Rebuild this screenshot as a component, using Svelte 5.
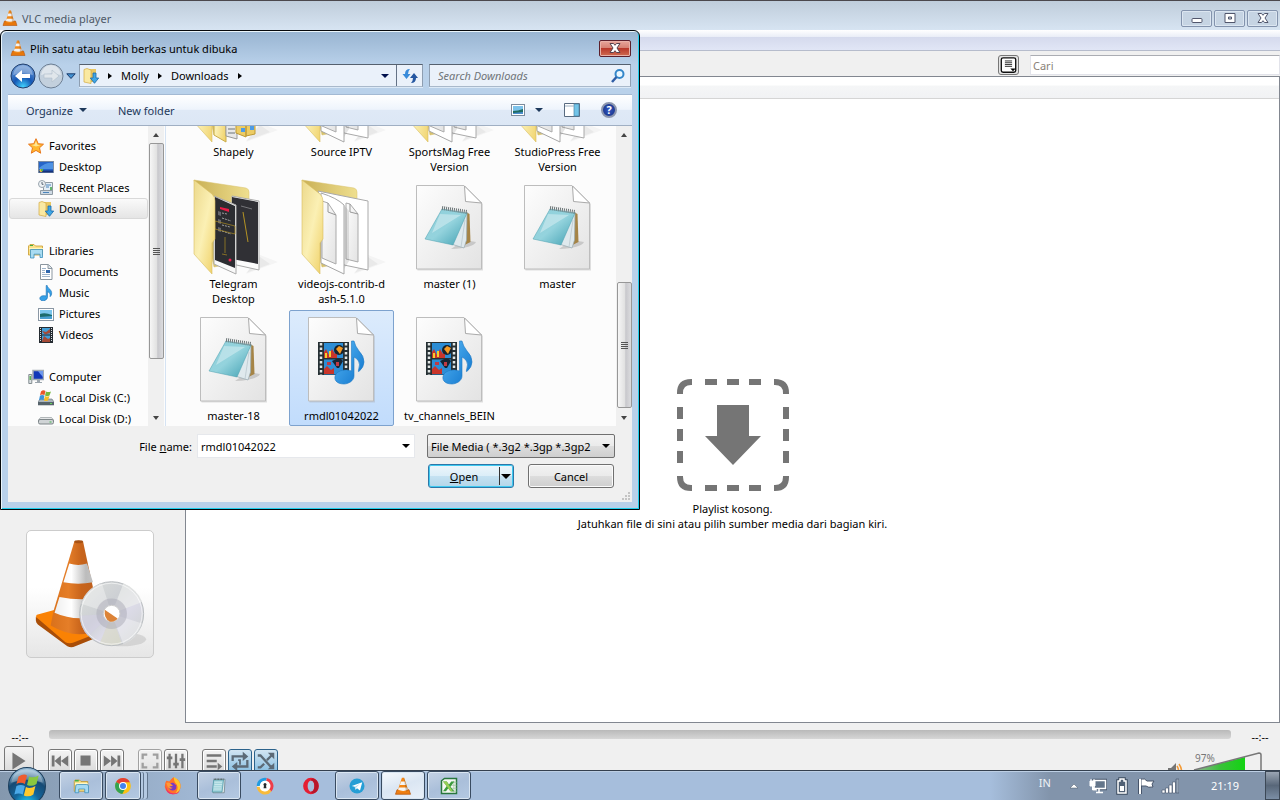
<script>
  const tree = [
    { name: 'Favorites', icon: 'star', items: [['Desktop', 'desktop'], ['Recent Places', 'recent'], ['Downloads', 'downloads']] },
    { name: 'Libraries', icon: 'library', items: [['Documents', 'document'], ['Music', 'music'], ['Pictures', 'picture'], ['Videos', 'video']] },
    { name: 'Computer', icon: 'computer', items: [['Local Disk (C:)', 'diskc'], ['Local Disk (D:)', 'diskd']] }
  ];
  const files = [
    ['Shapely', 'folder-mixed'], ['Source IPTV', 'folder-pages'], ['SportsMag Free\nVersion', 'folder-pages'], ['StudioPress Free\nVersion', 'folder-pages'],
    ['Telegram\nDesktop', 'folder-dark'], ['videojs-contrib-d\nash-5.1.0', 'folder-pages'], ['master (1)', 'notepad'], ['master', 'notepad'],
    ['master-18', 'notepad'], ['rmdl01042022', 'media'], ['tv_channels_BEIN', 'media']
  ];
  const tasks = [
    ['Explorer', 'open'], ['Chrome', 'open stack'], ['Firefox', ''], ['Notepad', 'open'], ['Browser', ''],
    ['Opera', ''], ['Telegram', 'open'], ['VLC', 'open active'], ['Excel', 'open']
  ];
  let selected = $state('rmdl01042022');
  let fileName = $state('rmdl01042022');
  function pick(name) {
    selected = name;
    fileName = name.replace('\n', ' ');
  }
</script>

{#snippet cone()}
  <svg class="i16" viewBox="0 0 16 16">
    <path d="M2.5 11h11l1.500 4.500H1z" fill="#e8780c" stroke="#b9560a" stroke-width=".6" />
    <path d="M7 .5h2L12.300 12q-4.300 2-8.600 0z" fill="#f08a1c" />
    <path d="M6.200 3.500h3.600l.9 2.700H5.300zM4.600 8.700h6.800l.7 2.300q-4 1.500-8.200 0z" fill="#f2f2f2" />
    <path d="M9 .5L12.300 12l-2 .8L8.300.5z" fill="#8b4a18" opacity=".3" />
  </svg>
{/snippet}

{#snippet small(kind)}
  <svg class="i16" viewBox="0 0 16 16">
    {#if kind === 'star'}
      <path d="M8 .7l2.200 5 5.300.5-4 3.600 1.200 5.400L8 12.400l-4.700 2.800 1.200-5.400-4-3.600 5.300-.5z" fill="#ffb82e" stroke="#e8771b" />
      <path d="M8 3l1.400 3.700 3 .5L8 8.500 3.500 7l3-.4z" fill="#ffe694" />
    {:else if kind === 'desktop'}
      <rect x=".5" y="2.500" width="15" height="11" fill="#2665c8" stroke="#7b8da5" />
      <path d="M1 9Q8 3 15 4v6H1z" fill="#5fa5ee" opacity=".7" />
      <path d="M1 11.500h14v2H1z" fill="#16337c" /><circle cx="3" cy="11.500" r="1.500" fill="#f2bd30" /><path d="M3 10h2v2H3z" fill="#56b84c" />
    {:else if kind === 'recent'}
      <path d="M5.500 2.500h9v9h-9z" fill="#e4eef6" stroke="#8f9aa3" /><path d="M2.500 10.500h12v4h-12z" fill="#cfdae4" stroke="#8f9aa3" />
      <path d="M8 5h5M8 7h3M5 12.500h6" stroke="#4b84ba" /><path d="M12 7h2v3h-2z" fill="#62b46c" />
      <circle cx="4" cy="4" r="3.500" fill="#eef2f5" stroke="#98a3ad" /><path d="M4 2v2.300h1.500" stroke="#596775" fill="none" />
    {:else if kind === 'downloads'}
      <path d="M4 1h9v13H4z" fill="#e9c763" /><path d="M1 1.500L4 .5l4 1.500v13.500L1 14z" fill="#fae9a2" stroke="#d2aa43" stroke-width=".7" />
      <path d="M10 5h3v5h2.700l-4.200 5.300L7.300 10H10z" fill="#3fa6e5" stroke="#1969aa" stroke-width=".8" />
    {:else if kind === 'library'}
      <path d="M.5 3L2 1.500h4L7.500 3h7v9H.5z" fill="#fae28a" stroke="#c99a2f" stroke-width=".8" /><path d="M2 2.500h3" stroke="#45ac42" />
      <path d="M2.500 6.500h12v8h-2.500v-3.300h-6v3.800H2.500z" fill="#a9dcf2" stroke="#3c91be" stroke-width=".8" /><path d="M1 5.500h14" stroke="#fff5bd" />
    {:else if kind === 'document'}
      <path d="M2.500.5h8l3.500 3.500v11.500H2.500z" fill="#fff" stroke="#8b969f" /><path d="M10 .5V4.500h4" fill="#dce5eb" stroke="#8b969f" />
      <path d="M4 4.500h4M4 6.500h3M4 8.500h3M4 10.500h8M4 12.500h8" stroke="#9fb5cb" /><path d="M8 6h4v3H8z" fill="#2e67ad" />
    {:else if kind === 'music'}
      <path d="M8.200.5h1c.3 3 5 3.900 4.400 8.400-.2 1.500-1 2.300-1.500 2.800.5-3-.8-4.400-2.600-5v5.500c0 2.800-3.800 4.100-5.700 3.500-2.900-1-2.700-4.600 1.300-5 1-.1 2.300 0 3.100.3z" fill="#35a0e7" stroke="#176fb3" stroke-width=".6" />
    {:else if kind === 'picture'}
      <rect x=".5" y="2.500" width="15" height="12" fill="#fff" stroke="#8a97a4" /><path d="M2 4h12v9H2z" fill="#7bc6ed" /><path d="M2 8q5-2 12 1v4H2z" fill="#1b6b6d" /><path d="M2 11l12-1v3H2z" fill="#499fd1" />
    {:else if kind === 'video'}
      <path d="M1 0h14v16H1z" fill="#252b31" /><path d="M4 1h8v6.500H4zM4 8.500h8V15H4z" fill="#439ed6" /><path d="M4 4l4 1 4-3v4l-5 1.500zM4 14l2-5 4 3 2-1v4H4z" fill="#a54a36" />
      <path d="M2.500 1v14M13.500 1v14" stroke="#d8dde0" stroke-dasharray="1 1" />
    {:else if kind === 'computer'}
      <path d="M5 1.500h10.500v9H5z" fill="#1338b8" stroke="#a2abb4" stroke-width="1.500" /><path d="M10 2l5 0v6q-3-3-5-6z" fill="#6f98eb" /><path d="M9 11h3v2h2v1H7v-1h2z" fill="#9ca6ae" />
      <path d="M.8 5.500h3v9h-3z" fill="#dce2e4" stroke="#848d91" /><path d="M1.500 7h1.500v4H1.500z" fill="#5cb753" />
    {:else if kind === 'diskc'}
      <path d="M2 9h12l2 3v3H0v-3z" fill="#a9b4bc" stroke="#626d75" stroke-width=".6" /><path d="M0 12h16v3H0z" fill="#56636b" /><path d="M12 13h2v1h-2z" fill="#65d35c" />
      <path d="M3 1.500q2-2 4.500-.5L6.500 5q-2.500-1-4.500 0z" fill="#e9562b" /><path d="M8 1.500q2 1 5 0L11.500 5.500q-2.500 1-4.500 0z" fill="#76b83e" /><path d="M2 5.500q2-1 4.500 0L5.500 10q-2-1-4.500 0z" fill="#3a92db" /><path d="M7 6q2 1 4.500 0L10 10.500q-2 1-4 0z" fill="#f5bd26" />
    {:else if kind === 'diskd'}
      <path d="M2.500 6.500h11L16 9.500H0z" fill="#e4e6e7" stroke="#969da0" stroke-width=".7" /><rect x=".5" y="8.500" width="15" height="4.500" rx="1.500" fill="#d0d4d6" stroke="#7e8689" /><path d="M11.500 10.500h2v1h-2z" fill="#43b94c" />
    {/if}
  </svg>
{/snippet}

{#snippet big(kind)}
  <svg class="thumb" viewBox={kind.startsWith('folder') ? '0 0 96 96' : '1 1 96 96'}>
    {#if kind.startsWith('folder')}
      <path d="M60 95L92 83 74 76z" fill="#777" opacity=".06" /><path d="M60 94L84 85 74 78z" fill="#777" opacity=".08" />
      <path d="M8 1L60 9q3 1 3 4v68l-35 7z" fill="url(#backg)" stroke="#d8c06b" stroke-width=".5" />
      {#if kind === 'folder-dark'}
        <path d="M46 17l27 5v69l-27-6z" fill="#fcfcfc" stroke="#aaa" /><path d="M46 18l26 5v62l-26-5z" fill="#303035" />
        <path d="M57 33l5 30" stroke="#b49324" /><path d="M55 27l11 3" stroke="#76767a" />
        <path d="M28 17l22 9v69l-22-10z" fill="#f9f9f9" stroke="#aaa" /><path d="M29 18l20 9v62l-20-8z" fill="#2c2d31" />
        <path d="M34 28l9 2v3l-9-3z" fill="#e91c47" /><path d="M32 32l3 1v4l-3-1zM32 40l3 1v4l-3-1zM32 48l3 1v4l-3-1z" fill="#66666d" />
        <path d="M36 34l5 1m-5 4l9 3m-9 4l8 2m-8 4l9 3" stroke="#a0a0a2" stroke-dasharray="2 1" /><path d="M29 42l20 5v8l-20-5zM39 58v16m-3 1l5 1" fill="none" stroke="#ac8c22" stroke-width=".7" /><circle cx="44" cy="81" r="1.500" fill="#f02251" />
      {:else if kind === 'folder-mixed'}
        <path d="M28 20l12 5v70l-12-7z" fill="url(#flapg)" stroke="#c9ac4a" /><path d="M39 20l12 4v68l-11-3z" fill="#e8e8e8" stroke="#999" />
        <path d="M42 78h7m-7 4h7m-7 4h7" stroke="#6d7478" /><path d="M50 22l10 3v65l-10-4zM60 24l9 3v60l-9 2z" fill="#edcc64" stroke="#bd9a35" /><path d="M55 81h4v4h-4zM64 79h4v4h-4z" fill="#4e9be4" />
      {:else}
        <path d="M24 12l50 10v69l-24-5z" fill="#fff" stroke="#aaa" /><path d="M52 24l4 1 8 10v48l-12-3z" fill="url(#paperg)" stroke="#aaa" /><path d="M56 25v8l8 2" fill="none" stroke="#999" />
        <path d="M50 26l5 6v50l-5 8z" fill="#777" opacity=".2" />
        <path d="M27 14q16 5 23 12v69L27 84z" fill="#fff" stroke="#a6a6a6" /><path d="M28 22l6 2 8 12v49l-14-6z" fill="url(#paperg)" stroke="#aaa" /><path d="M34 24v9l8 3" fill="none" stroke="#999" />
      {/if}
      <path d="M8 1L26 15q3 3 3 7v38l-3 4v31L8 75z" fill="url(#flapg)" stroke="#d9bd60" stroke-width=".6" />
    {:else}
      <path d="M15.500 7.500H63L81 25v66.500H15.500z" fill="#999" opacity=".3" transform="translate(1 1)" />
      <path d="M15.500 7.500H63L80.500 25v66H15.500z" fill="url(#paperg)" stroke="#bdbdbd" />
      <path d="M63.500 8l1 15.500 16 1.500z" fill="#fff" stroke="#aaa" />
      {#if kind === 'notepad'}
        <path d="M50 71q22-1 25-7l-12-2z" fill="#444" opacity=".2" /><path d="M65 34l3.500 2 1 28-6 3z" fill="#a58446" />
        <path d="M66 34l-.5 28-2.500 8-13-4z" fill="#dfe9ed" stroke="#9aabb2" stroke-width=".7" /><path d="M64 42l-4 27" stroke="#b4c3ca" stroke-width=".7" />
        <path d="M41 31l25 4-14 32-28-6z" fill="url(#padg)" stroke="#4b9fae" stroke-width=".5" /><path d="M39 36l-8 19 29-18z" fill="#fff" opacity=".35" /><path d="M41 30l25 4" stroke="#6b7577" stroke-width="4" stroke-dasharray="1 1" />
      {:else}
        <path d="M25 32h31v33H25z" fill="#263034" /><path d="M31 33h19v15H31zM31 49.500h19v15H31z" fill="#2c8dd5" />
        <path d="M31 42l2-3 3 6 3-6 3 5 2-3v7H31zM31 59l3-3 4 4 3-2v6H31z" fill="#c9352a" /><path d="M32 43h2v5h-2zM36 41h2v6h-2z" fill="#f4ce2f" />
        <circle cx="46" cy="40" r="5" fill="#18222b" /><path d="M43 39l3-3 4 2-3 6z" fill="#f59a23" /><path d="M39 51q8-5 11 0l-4 7h-2z" fill="#172634" /><path d="M34 52h4v3h-4zM43 52h3v4h-3z" fill="#c03a44" />
        <path d="M28 33v32M53 33v32" stroke="#e1e6e5" stroke-width="2.500" stroke-dasharray="2.500 2" />
        <path d="M58.500 31h2.500q1 5 5 10 5 5 5 11 0 5-5 9.500-1 .5-.5-1.500 2-6 0-9-2-3-4.500-4v19c0 5-6 8-10 8-8 0-11-5-8-10 3-4 10-5 15.500-3z" fill="url(#noteg)" stroke="#1d78c4" stroke-width=".6" />
      {/if}
    {/if}
  </svg>
{/snippet}

{#snippet task(kind)}
  <svg class="i18" viewBox="0 0 24 24">
    {#if kind === 'Explorer'}
      <path d="M3 6l1-2h6l2 2h9v13H3z" fill="#f7df85" stroke="#bc922e" /><path d="M4 5h5" stroke="#46af45" stroke-width="2" /><path d="M4 9h17" stroke="#fff7c8" stroke-width="2" />
      <path d="M5 12q0-2 2-2h12q3 0 3 2v9h-5v-5H9v5H4z" fill="#a4daf3" stroke="#398cba" />
    {:else if kind === 'Chrome'}
      <circle cx="12" cy="12" r="10.500" fill="#fbc116" /><path d="M12 12L2.800 6.800A10.500 10.500 0 0121.200 7H12z" fill="#e44032" /><path d="M12 12L2.800 6.800a10.500 10.500 0 008.200 15.700l5-9z" fill="#33a351" /><circle cx="12" cy="12" r="5.300" fill="#fff" /><circle cx="12" cy="12" r="4" fill="#4283ef" />
    {:else if kind === 'Firefox'}
      <path d="M3 5q2 0 4 1Q9 3 13 0q0 2 3 4l2-1q5 5 4 11-1 9-10 9T1 13Q1 8 3 5z" fill="#ff712b" /><path d="M13 0q9 4 9 13-1 7-7 9 5-6 2-12-4-4-4-10z" fill="#ffc42a" /><path d="M2 11q2 10 11 11 5 0 8-4-3 6-10 5-9-1-9-12z" fill="#eb2f73" /><path d="M7 10q2-3 6-2l3 3q2 6-4 7-5 0-6-5z" fill="#793ac5" /><path d="M3 8q4-2 7 2l2 1q-2 2-5 1 2 3 5 2-4 4-7-1z" fill="#ff9a35" />
    {:else if kind === 'Notepad'}
      <path d="M6 3h14l-1 18H4z" fill="#e1e9eb" stroke="#6c8389" /><path d="M5 4h13l-2 16H3z" fill="#a5d5dd" stroke="#4a96a4" /><path d="M6 7h10M6 10h10M5 13h10M5 16h10" stroke="#d4edf0" /><path d="M5 3h14" stroke="#535d5f" stroke-width="2" stroke-dasharray="1 1" />
    {:else if kind === 'Browser'}
      <circle cx="12" cy="12" r="10.500" fill="#fff" /><path d="M3 12A9 9 0 0114 3.200" stroke="#209be1" stroke-width="4" fill="none" /><path d="M14 3.200A9 9 0 0119 18" stroke="#ee3d49" stroke-width="4" fill="none" /><path d="M3 13a9 9 0 0016 5" stroke="#f8bb3b" stroke-width="4" fill="none" />
      <path d="M7 7l5-2 5 2v6q0 3-5 6-5-3-5-6z" fill="#fff" /><circle cx="12" cy="10" r="2" fill="#26292e" /><path d="M11 10h2l1 5h-4z" fill="#26292e" />
    {:else if kind === 'Opera'}
      <path fill-rule="evenodd" d="M12 1a10.500 11 0 100 22 10.500 11 0 000-22zm0 3.500a4.500 7.500 0 110 15 4.500 7.500 0 010-15z" fill="#e51e32" /><path d="M14 2q8 1 8 10t-8 10q-1 0-2-2.500 4.500 0 4.500-7.500T12 4.500q0-2 2-2.500z" fill="#b81529" />
    {:else if kind === 'Telegram'}
      <circle cx="12" cy="12" r="10" fill="#269ed5" /><path d="M5 12l14-5-3 11-4-3-2 2-1-4z" fill="#fff" /><path d="M9 13l7-4-5 5-1 3z" fill="#b7dbef" />
    {:else if kind === 'Excel'}
      <path d="M2 5l4-3h16v20H2z" fill="#f5f8f3" stroke="#28773d" stroke-width="2" /><path d="M15 7h7M15 11h7M15 15h7M15 19h7M18.500 5v16" stroke="#9dc29e" /><path d="M4 6h5l3 4 3-4h4l-5 7 5 6h-5l-3-4-3 4H4l5-7z" fill="#3b9b3d" /><path d="M4 6h5l8 13h-3z" fill="#97ce55" />
    {:else}
      <path d="M4 17h16l2 6H2z" fill="#ee7e13" stroke="#b5570d" /><path d="M10.500 1h3L19 18q-7 4-14 0z" fill="#f38616" /><path d="M9.300 6h5.400l1.500 4.500H7.800zM6.500 14h11l1 3q-6 3-13 0z" fill="#f6f6f6" /><path d="M13 1h.5L19 18l-3 1.500z" fill="#66401e" opacity=".3" />
    {/if}
  </svg>
{/snippet}

{#snippet scrollbar(cls)}
  <div class="scroll {cls}" aria-hidden="true">
    <span class="arrow up"></span>
    <span class="grab"><i></i><i></i><i></i><i></i></span>
    <span class="space"></span>
    <span class="arrow down"></span>
  </div>
{/snippet}

<svg class="defs" width="0" height="0" aria-hidden="true">
  <defs>
    <linearGradient id="flapg" x1="0" y1="0" x2="1" y2="1"><stop offset="0" stop-color="#ecd98c" /><stop offset=".5" stop-color="#fbf0b4" /><stop offset="1" stop-color="#efcf63" /></linearGradient>
    <linearGradient id="backg"><stop offset="0" stop-color="#c9b055" /><stop offset="1" stop-color="#efdf8f" /></linearGradient>
    <linearGradient id="paperg" x1="0" y1="0" x2="1" y2="1"><stop offset="0" stop-color="#fdfdfd" /><stop offset="1" stop-color="#e3e3e3" /></linearGradient>
    <linearGradient id="padg" x1="0" y1="0" x2="1" y2="1"><stop offset="0" stop-color="#8fcfda" /><stop offset=".5" stop-color="#94d3dd" /><stop offset="1" stop-color="#3f9fb1" /></linearGradient>
    <linearGradient id="noteg" x1="0" y1="0" x2="1" y2="1"><stop offset="0" stop-color="#58b9f6" /><stop offset="1" stop-color="#0f73cb" /></linearGradient>
    <linearGradient id="coneg"><stop offset="0" stop-color="#d9711b" /><stop offset=".35" stop-color="#e57e28" /><stop offset=".6" stop-color="#c8641b" /><stop offset="1" stop-color="#b85f20" /></linearGradient>
    <linearGradient id="whiteg"><stop offset="0" stop-color="#eee" /><stop offset=".35" stop-color="#fff" /><stop offset=".65" stop-color="#bcbcbc" /><stop offset="1" stop-color="#c9c9c9" /></linearGradient>
    <linearGradient id="discg" x1="0" y1="0" x2="1" y2="1"><stop offset="0" stop-color="#dde0dc" /><stop offset=".4" stop-color="#cdd0d4" /><stop offset=".6" stop-color="#dcdbe8" /><stop offset="1" stop-color="#cbd0cc" /></linearGradient>
    <radialGradient id="navg" cx=".5" cy=".95" r=".8"><stop offset="0" stop-color="#42d4ff" /><stop offset=".5" stop-color="#1557b5" /><stop offset="1" stop-color="#5d8ed0" /></radialGradient>
    <radialGradient id="orbg" cx=".5" cy="1" r=".9"><stop offset="0" stop-color="#20d8ff" /><stop offset=".4" stop-color="#14669c" /><stop offset=".75" stop-color="#164a74" /><stop offset="1" stop-color="#8db3cf" /></radialGradient>
    <linearGradient id="volg"><stop offset="0" stop-color="#9ab39a" /><stop offset=".5" stop-color="#3bc13b" /><stop offset="1" stop-color="#12d312" /></linearGradient>
  </defs>
</svg>

<div class="screen">
  <main class="player">
    <header class="caption">
      {@render cone()}<h1>VLC media player</h1>
      <div class="winbtns">
        <button aria-label="Minimize"><svg viewBox="0 0 14 12"><rect x="2" y="6.500" width="10" height="4" rx="1" fill="#fff" stroke="#51566c" /></svg></button>
        <button aria-label="Maximize"><svg viewBox="0 0 14 12"><path d="M2 1.500h10v9H2zM5.500 5h3v2h-3z" fill="#fff" fill-rule="evenodd" stroke="#51566c" /></svg></button>
        <button aria-label="Close"><svg viewBox="0 0 14 12"><path d="M2 1.500h3.500L7 3.300l1.500-1.800H12L9 6l3 4.500H8.500L7 8.700l-1.500 1.800H2L5 6z" fill="#fff" stroke="#51566c" /></svg></button>
      </div>
    </header>
    <div class="menubar"></div>
    <div class="tools">
      <button class="viewmode" aria-label="Playlist view"><svg viewBox="0 0 20 20"><rect x="2" y="2" width="16" height="16" rx="2" fill="#fff" stroke="#111" stroke-width="1.500" /><path d="M6 5.500h8M6 7.500h8M6 9.500h8M6 11.500h8" stroke="#222" /><path d="M12 14h6l-3 3z" /></svg></button>
      <input class="cari" aria-label="Cari" placeholder="Cari" />
    </div>
    <div class="content">
      <aside class="cover">
        <svg viewBox="0 0 128 128">
          <ellipse cx="97" cy="110" rx="24" ry="7" fill="#777" opacity=".2" />
          <path d="M9 87l37 20 48-13v5l-45 18q-4 2-8 0L11 95q-2-2-2-4z" fill="#a94e08" />
          <path d="M10 85l26-7 50 12 8 5-46 18q-5 2-9 0L11 89q-3-2-1-4z" fill="#fa8204" />
          <path d="M48 11q4-2 9 0l19 88q-25 13-52-3l3-15z" fill="url(#coneg)" />
          <path d="M43 33q9 3 18 0l6 19q-15 3-30 0zM33 67q20 4 38 1l6 17q-27 8-49-2z" fill="url(#whiteg)" />
          <ellipse cx="52.500" cy="11" rx="4.500" ry="1.500" fill="#a75113" />
          <circle cx="86" cy="84" r="32.500" fill="url(#discg)" stroke="#b9bdc0" />
          <path d="M86 84L55 74q5-17 21-21zM86 84l31 10q-5 16-19 21z" fill="#fff" opacity=".35" /><path d="M86 84l12-31q14 5 19 19z" fill="#eceeed" opacity=".7" /><path d="M86 84L62 107q-8-9-8-21z" fill="#d3cfe6" opacity=".5" /><path d="M86 84L74 114q12 4 22 0z" fill="#d9d9bd" opacity=".5" />
          <circle cx="86" cy="84" r="31" fill="none" stroke="#fff" opacity=".6" />
          <circle cx="86" cy="84" r="15.500" fill="#aaaab5" opacity=".5" /><circle cx="86" cy="84" r="8.500" fill="#fff" stroke="#ccc" /><path d="M79 80l13 9q-3 4-8 3-6-3-5-12z" fill="#dc8337" />
        </svg>
      </aside>
      <section class="playlist">
        <div class="columns"></div>
        <div class="drop">
          <svg viewBox="0 0 112 112">
            <g fill="none" stroke="#757575" stroke-width="6"><path d="M3 15V14Q3 3 14 3h1M97 3h1q11 0 11 11v1M109 97v1q0 11-11 11h-1M15 109h-1Q3 109 3 98v-1" /><path d="M28 3h12M50 3h12M72 3h12M28 109h12M50 109h12M72 109h12M3 28v12M3 50v12M3 72v12M109 28v12M109 50v12M109 72v12" /></g>
            <path d="M40 26h32v31h12L56 86 28 57h12z" fill="#757575" />
          </svg>
          <p>Playlist kosong.<br />Jatuhkan file di sini atau pilih sumber media dari bagian kiri.</p>
        </div>
      </section>
    </div>
    <footer class="controls">
      <div class="seek"><span>--:--</span><div class="track"></div><span>--:--</span></div>
      <div class="buttons">
        <button class="play" aria-label="Play"><svg viewBox="0 0 30 30"><path d="M8 6l14 9-14 9z" fill="#757575" /></svg></button>
        <div class="group">
          <button aria-label="Previous"><svg viewBox="0 0 24 24"><path d="M3 6h3v12H3zM13 6v12l-7-6zM21 6v12l-8-6z" fill="#757575" /></svg></button>
          <button aria-label="Stop"><svg viewBox="0 0 24 24"><path d="M6 6h11v11H6z" fill="#757575" /></svg></button>
          <button aria-label="Next"><svg viewBox="0 0 24 24"><path d="M18 6h3v12h-3zM3 6v12l8-6zM11 6v12l7-6z" fill="#757575" /></svg></button>
        </div>
        <div class="group">
          <button class="faint" aria-label="Fullscreen"><svg viewBox="0 0 24 24"><path d="M4 10V5h5M15 5h5v5M20 14v5h-5M9 19H4v-5" fill="none" stroke="#757575" stroke-width="2.500" /></svg></button>
          <button aria-label="Extended settings"><svg viewBox="0 0 24 24"><path d="M5 4v16M12 4v16M19 4v16" stroke="#757575" stroke-width="2.500" /><path d="M2 7h6v3H2zM9 14h6v3H9zM16 9h6v3h-6z" fill="#757575" /></svg></button>
        </div>
        <div class="group">
          <button aria-label="Playlist"><svg viewBox="0 0 24 24"><path d="M4 6h16M4 12h11M4 18h11" stroke="#757575" stroke-width="2.500" /><path d="M16 14l5 4-5 4z" fill="#757575" /></svg></button>
          <button class="on" aria-label="Loop"><svg viewBox="0 0 24 24"><path d="M4 12V7h12M20 11v7H8" fill="none" stroke="#5c6a76" stroke-width="2.500" /><path d="M15 2l6 5-6 5zM9 13l-6 5 6 5z" fill="#5c6a76" /><path d="M10 11h2v5" stroke="#5c6a76" fill="none" stroke-width="2" /></svg></button>
          <button class="on" aria-label="Shuffle"><svg viewBox="0 0 24 24"><path d="M3 6h3l11 12h2M3 19h3l4-4M13 11l5-5" fill="none" stroke="#5c6a76" stroke-width="2.500" /><path d="M14 3h7v7zM21 14v7h-7z" fill="#5c6a76" /></svg></button>
        </div>
        <div class="volume">
          <svg viewBox="0 0 96 32" role="img" aria-label="Volume"><path d="M2 18h3l5-5v16l-5-5H2z" fill="#757575" /><path d="M11 16q3 5 0 9M13 14q5 7 0 13" stroke="#f39a35" stroke-width="1.500" fill="none" /><path d="M28 20L79 7v23H28z" fill="url(#volg)" /><path d="M28 20L93 3q2 0 2 2v25" fill="none" stroke="#777" stroke-width="1.500" /></svg>
          <span>97%</span>
        </div>
      </div>
    </footer>
  </main>

  <nav class="taskbar" aria-label="Taskbar">
    <button class="orb" aria-label="Start"><svg viewBox="0 0 36 36"><circle cx="18" cy="18" r="17.500" fill="url(#orbg)" stroke="#1c3f5d" /><path d="M3 15Q5 3 18 2q13 1 15 13-15-6-30 0z" fill="#fff" opacity=".3" /><path d="M10 9q5-3 8-1l-2 8q-4-2-8 0z" fill="#ef5c2e" /><path d="M20 9q4 2 9-1l-2 8q-4 3-9 1z" fill="#8ac83f" /><path d="M8 18q4-2 8 0l-2 8q-4-2-8 0z" fill="#4ba9e8" /><path d="M17 19q4 2 9-1l-2 8q-4 3-9 1z" fill="#ffc92c" /></svg></button>
    {#each tasks as [name, look]}
      <button class="task {look}" aria-label={name}>{@render task(name)}</button>
    {/each}
    <div class="tray">
      <span class="lang">IN</span>
      <svg class="chev" viewBox="0 0 10 6"><path d="M1 5l4-4 4 4z" fill="#fff" stroke="#4b5968" stroke-width=".5" /></svg>
      <svg viewBox="0 0 18 18"><path d="M5 3.500h11.500v8H5z" fill="none" stroke="#46546a" stroke-width="3.500" /><path d="M5 3.500h11.500v8H5z" fill="#63758a" stroke="#fff" stroke-width="1.500" /><path d="M10 12v3M7 15.500h7" stroke="#fff" stroke-width="1.500" /><path d="M1 4h5v5H1zM2 2v2m3-2v2M3.500 9v4H8" fill="#fff" stroke="#fff" /></svg>
      <svg viewBox="0 0 18 18"><path d="M7 2h4v2h2v12H5V4h2z" fill="#506074" stroke="#3e4d61" stroke-width="3.500" /><path d="M7 2h4v2h2v12H5V4h2z" fill="#506074" stroke="#fff" stroke-width="1.500" /><path d="M7 9h4v5H7z" fill="#fff" /></svg>
      <svg viewBox="0 0 18 18"><path d="M3 2v15" stroke="#46546a" stroke-width="4" /><path d="M4 2q4-1 6 2h7l-2 3 1 3q-5 1-7-1H4z" fill="#fff" stroke="#46546a" /><path d="M3 2v15" stroke="#fff" stroke-width="2" /></svg>
      <svg viewBox="0 0 18 18"><path d="M1 13h3v3H1zM4.500 11h3v5h-3zM8 8h3v8H8zM11.500 5h3v11h-3z" fill="#fff" stroke="#435268" stroke-width=".6" /><path d="M15 2h3v14h-3z" fill="#95a4b5" stroke="#435268" stroke-width=".6" /></svg>
      <time>21:19</time>
      <button class="peek" aria-label="Show desktop"></button>
    </div>
  </nav>

  <div class="dialog" role="dialog" aria-labelledby="dlgtitle">
    <div class="dlghead">
      {@render cone()}<h2 id="dlgtitle">Plih satu atau lebih berkas untuk dibuka</h2>
      <button class="close" aria-label="Close dialog"><svg viewBox="0 0 14 12"><path d="M2 1.500h3.500L7 3.300l1.500-1.800H12L9 6l3 4.500H8.500L7 8.700l-1.500 1.800H2L5 6z" fill="#fff" stroke="#57424d" /></svg></button>
    </div>
    <div class="nav">
      <div class="history">
        <button aria-label="Back"><svg viewBox="0 0 26 26"><circle cx="13" cy="13" r="12" fill="url(#navg)" stroke="#24406c" /><path d="M3 12Q5 2 13 2t10 10q-10-3-20 0z" fill="#fff" opacity=".3" /><path d="M5 13l7-6v4h8v4h-8v4z" fill="#fff" /></svg></button>
        <button aria-label="Forward"><svg viewBox="0 0 26 26"><circle cx="13" cy="13" r="12" fill="#c3d0dd" stroke="#6d7f94" /><path d="M3 12Q5 2 13 2t10 10q-10-3-20 0z" fill="#fff" opacity=".45" /><path d="M21 13l-7-6v4H6v4h8v4z" fill="#e0e6eb" stroke="#afbdca" stroke-width=".6" /></svg></button>
        <svg class="caret" viewBox="0 0 10 6"><path d="M.8.800h8.400L5 5.500z" fill="#4292d3" stroke="#1c3c6d" /></svg>
      </div>
      <div class="address">
        {@render small('downloads')}
        <b></b><button>Molly</button><b></b><button>Downloads</button><b></b>
        <span class="tri"></span>
        <button class="refresh" aria-label="Refresh"><svg viewBox="0 0 16 16"><path d="M8 1Q3 1 3 6H.5L4.500 11 8.500 6H6q0-3 2-5z" fill="#398bda" /><path d="M9 15q5 0 5-5h2l-4-5-4 5h3q0 3-2 5z" fill="#2557a1" /></svg></button>
      </div>
      <div class="search">
        <input aria-label="Search Downloads" placeholder="Search Downloads" />
        <svg class="i16" viewBox="0 0 16 16"><circle cx="9.500" cy="6" r="4" fill="#eaf7ff" stroke="#3386c9" stroke-width="2" /><path d="M6.500 9L2 14" stroke="#2f5da5" stroke-width="2.500" /></svg>
      </div>
    </div>
    <div class="panel">
      <div class="commands">
        <button>Organize <span class="tri"></span></button><button>New folder</button>
        <div class="views">
          <button aria-label="Change view"><svg viewBox="0 0 16 16"><rect x="1.500" y="2.500" width="13" height="11" fill="#fff" stroke="#7c8b9d" /><path d="M3 4h10v8H3z" fill="#7cc2ea" /><path d="M3 9q5 0 10-2v5H3z" fill="#1f6c62" /><path d="M3 11l10-1v2H3z" fill="#4c8fd0" /></svg><span class="tri"></span></button>
          <button aria-label="Preview pane"><svg viewBox="0 0 16 16"><path d="M.5 1.500h15v13H.5z" fill="#fff" stroke="#596b80" /><path d="M10 2h5v12h-5z" fill="#72c4e8" stroke="#4b88a7" stroke-width=".7" /><path d="M1 4h9" stroke="#9eb0c1" /></svg></button>
          <button class="help" aria-label="Help"><span>?</span></button>
        </div>
      </div>
      <div class="browse">
        <div class="treewrap">
          <ul class="tree">
            {#each tree as group}
              <li class="top">{@render small(group.icon)}<span>{group.name}</span></li>
              {#each group.items as [name, icon]}
                <li class:current={name === 'Downloads'}>{@render small(icon)}<span>{name}</span></li>
              {/each}
            {/each}
          </ul>
        </div>
        {@render scrollbar('left')}
        <div class="files">
          {#each files as [name, icon]}
            <button class="file" class:selected={selected === name} onclick={() => pick(name)}>{@render big(icon)}<span>{name}</span></button>
          {/each}
        </div>
        {@render scrollbar('right')}
      </div>
      <form class="bottom" onsubmit={(e) => e.preventDefault()}>
        <label for="fname">File <u>n</u>ame:</label>
        <div class="combo name"><input id="fname" bind:value={fileName} /><span class="tri"></span></div>
        <div class="combo type"><select aria-label="File type"><option>File Media ( *.3g2 *.3gp *.3gp2 *.3gpp</option></select><span class="tri"></span></div>
        <div class="actions">
          <button class="open"><span><u>O</u>pen</span><i><b class="tri"></b></i></button>
          <button class="cancel" type="button">Cancel</button>
        </div>
        <svg class="grip" viewBox="0 0 8 8"><path d="M6 0h2v2H6zM3 3h2v2H3zM6 3h2v2H6zM0 6h2v2H0zM3 6h2v2H3zM6 6h2v2H6z" fill="#c4c4c4" /></svg>
      </form>
    </div>
  </div>
</div>

<style>
  :global(body) { margin: 0; overflow: hidden; }
  * { box-sizing: border-box; }
  .screen { position: relative; height: 100vh; display: flex; flex-direction: column; overflow: hidden; font: 11px/15px "Noto Sans", "Open Sans", sans-serif; color: #000; }
  button { font: inherit; color: inherit; padding: 0; border: 0; background: none; display: flex; align-items: center; justify-content: center; }
  input, select { font: inherit; color: inherit; min-width: 0; border: 0; outline: 0; background: none; padding: 0; }
  h1, h2, p, ul { margin: 0; padding: 0; font: inherit; list-style: none; }
  svg { display: block; flex: none; }
  .defs { position: absolute; }
  .i16 { width: 16px; height: 16px; }
  .i18 { width: 18px; height: 18px; }
  .tri { flex: none; width: 0; height: 0; border: 4px solid transparent; border-top-color: currentColor; border-bottom: 0; }

  .player { flex: 1; min-height: 0; display: flex; flex-direction: column; background: #f0f0f0; }
  .caption { flex: none; height: 30px; display: flex; align-items: center; gap: 4px; padding: 5px 2px 0 2px; border-top: 1px solid #4b484d; background: linear-gradient(#bfcddb, #d7e4f2); color: #4f5967; }
  .caption h1 { font-size: 11px; flex: 1; }
  .winbtns { display: flex; gap: 2px; }
  .winbtns button { width: 31px; height: 17px; border: 1px solid #8393ad; border-radius: 2px; box-shadow: inset 0 0 0 1px #dce6f1; background: #c6d4e3; }
  .winbtns svg { width: 14px; height: 12px; }
  .menubar { flex: none; height: 21px; background: linear-gradient(#fff 0, #e9edf7 35%, #d5daed 36%, #e1e6f6); border-bottom: 1px solid #b6bccc; }
  .tools { flex: none; height: 25px; display: flex; align-items: center; gap: 11px; justify-content: flex-end; padding-top: 3px; }
  .viewmode { width: 21px; height: 20px; border: 1px solid #777; border-radius: 3px; background: #e5e5e5; }
  .viewmode svg { width: 19px; height: 18px; }
  .cari { width: 250px; height: 20px; border: 1px solid #e2e3ea; border-top-color: #abadb3; background: #fff; padding: 2px; }
  .cari::placeholder { color: #8a8278; opacity: 1; }
  .content { flex: 1; min-height: 0; display: flex; }
  .cover { width: 185px; display: flex; align-items: flex-end; justify-content: center; padding: 0 5px 65px 0; }
  .cover svg { width: 128px; height: 128px; border: 1px solid #ccc; border-radius: 5px; background: linear-gradient(#fff 45%, #e6e6e6); }
  .playlist { flex: 1; border: 1px solid #828790; background: #fff; }
  .columns { height: 22px; background: linear-gradient(#fff 40%, #f5f6f7 41%, #f1f2f4); border-bottom: 1px solid #d5d5d5; }
  .drop { display: flex; flex-direction: column; align-items: center; gap: 10px; padding-top: 280px; text-align: center; }
  .drop svg { width: 112px; height: 112px; }
  .controls { flex: none; height: 47px; overflow: hidden; }
  .seek { height: 23px; display: flex; align-items: center; gap: 19px; padding: 0 10px; }
  .seek span { width: 20px; display: flex; justify-content: center; padding-top: 3px; }
  .track { flex: 1; height: 9px; border-radius: 3px; background: linear-gradient(#b9b9b9, #d6d6d6); }
  .buttons { display: flex; align-items: flex-start; gap: 14px; padding: 0 18px 0 4px; }
  .group { display: flex; gap: 2px; padding-top: 3px; }
  .group button { width: 24px; height: 24px; border: 1px solid #777; border-radius: 3px; background: linear-gradient(#f4f4f4, #dadada); box-shadow: inset 0 0 0 1px #fff; }
  .group svg { width: 22px; height: 22px; }
  .group .faint { opacity: .65; }
  .group .on { border-color: #2c628b; background: linear-gradient(#d2e5f2, #88bfe2); box-shadow: none; }
  .play { width: 30px; height: 30px; border: 1px solid #777; border-radius: 3px; background: linear-gradient(#f4f4f4, #d8d8d8); }
  .play svg { width: 30px; height: 28px; }
  .volume { position: relative; margin-left: auto; padding-top: 4px; }
  .volume svg { width: 96px; height: 32px; }
  .volume span { position: absolute; left: 29px; top: 6px; font-size: 10px; line-height: 12px; color: #777; }

  .taskbar { position: relative; flex: none; height: 30px; display: flex; gap: 2px; border-top: 1px solid #34404f; box-shadow: inset 0 1px #bdcfe4; background: linear-gradient(90deg, #8498ae, #a6bedc 240px, #a6bedc calc(100% - 290px), #8294ab calc(100% - 230px)); }
  .orb { width: 57px; padding-right: 3px; }
  .orb svg { width: 38px; height: 38px; }
  .task { width: 44px; height: 29px; border: 1px solid transparent; border-radius: 3px; }
  .open.task { border-color: #394b61; background: linear-gradient(160deg, #c4d2e4, #aabfda 50%, #b4c9e2); box-shadow: inset 0 0 0 1px #dae6f2; }
  .stack.task { width: 36px; margin-right: 8px; box-shadow: inset 0 0 0 1px #dae6f2, 3px 0 0 -1px #b4c9e2, 4px 0 0 -1px #61758d, 7px 0 0 -1px #b4c9e2, 8px 0 0 -1px #61758d; }
  .active.task { background: linear-gradient(160deg, #f7fafd, #dbe6f3 50%, #e9f0f9); }
  .tray { margin-left: auto; display: flex; align-items: center; gap: 6px; color: #fff; }
  .tray svg { width: 18px; height: 18px; }
  .tray .chev { width: 10px; height: 6px; margin: 0 4px 0 12px; }
  .lang { padding-bottom: 6px; color: #eef2f6; }
  time { padding: 0 20px 0 26px; }
  .peek { width: 15px; height: 29px; border: 1px solid #3c4856; background: linear-gradient(#9aa5b3, #586779 50%, #7b8ea5); }

  .dialog { position: absolute; left: 0; top: 30px; width: 640px; padding: 0 7px 7px 7px; border: 1px solid #05080b; border-radius: 6px 6px 0 0; box-shadow: inset 1px 1px #eaf5fb, inset -1px -1px #20cfed; background: linear-gradient(#98b4d1, #b9d1ea 34px); }
  .dlghead { height: 31px; display: flex; align-items: center; gap: 4px; padding: 3px 1px 0 2px; }
  .dlghead h2 { flex: 1; }
  .close { width: 32px; height: 17px; border: 1px solid #5c1f2b; border-radius: 2px; background: linear-gradient(#e8a69b, #d58072 48%, #b9392b 50%, #cf6b50); box-shadow: inset 0 0 0 1px #e8b1a8; }
  .close svg { width: 14px; height: 12px; }
  .nav { height: 32px; display: flex; align-items: flex-start; gap: 6px; padding: 2px 1px 0 0; }
  .history { display: flex; align-items: center; gap: 2px; padding: 0 0 0 2px; height: 24px; }
  .history button, .history button svg { width: 26px; height: 26px; }
  .history .caret { width: 10px; height: 6px; }
  .address, .search { display: flex; align-items: center; height: 23px; border: 1px solid #6c7b8d; border-color: #55606e #8e9eb1 #a9b9cb; background: #eaf1fa; box-shadow: 0 1px #dbe9f7; }
  .address { flex: 1; margin-left: -3px; padding-left: 3px; gap: 9px; }
  .address b { width: 0; height: 0; border: 3px solid transparent; border-left: 4px solid #000; border-right: 0; }
  .address > .tri { margin-left: auto; color: #00104d; }
  .refresh { width: 26px; align-self: stretch; border-left: 1px solid #647286; margin-left: -2px; }
  .refresh svg { width: 16px; height: 16px; }
  .search { width: 202px; padding: 0 4px 0 8px; }
  .search input { flex: 1; }
  .search input::placeholder { font-style: italic; color: #6f7478; opacity: 1; }
  .panel { background: #f0f0f0; }
  .commands { height: 32px; display: flex; align-items: center; gap: 31px; padding: 0 15px 0 18px; border-top: 1px solid #a3b9d3; border-bottom: 1px solid #a0afc3; background: linear-gradient(#fff, #eef4fc 48%, #dfe9f6 50%, #dce7f5); color: #1e395b; }
  .commands button { gap: 6px; }
  .views { margin-left: auto; display: flex; align-items: center; gap: 21px; }
  .views button { gap: 9px; }
  .views svg { width: 16px; height: 16px; }
  .help { width: 16px; height: 16px; border-radius: 50%; background: radial-gradient(#3155c2, #16307e); border: 2px solid #8c96ae; color: #fff; font-weight: 700; }
  .help span { line-height: 12px; }
  .browse { height: 300px; display: flex; background: #fcfcfc; overflow: hidden; }
  .treewrap { flex: none; width: 140px; overflow: hidden; }
  .tree { padding: 9px 0 0 1px; }
  .tree li { height: 21px; display: flex; align-items: center; gap: 5px; padding-left: 28px; border: 1px solid transparent; border-radius: 3px; white-space: nowrap; }
  .tree .top { padding-left: 18px; }
  .tree li + .top { margin-top: 21px; }
  .tree .current { border-color: #d9d9d9; background: linear-gradient(#fafafa, #e5e5e5); }
  .scroll { flex: none; width: 16px; display: flex; flex-direction: column; align-items: center; background: #f0f0f0; }
  .scroll .arrow { height: 17px; display: flex; align-items: center; }
  .arrow::before { content: ""; border: 3px solid transparent; border-top: 4px solid #444; border-bottom: 0; }
  .arrow.up::before { border-top: 0; border-bottom: 4px solid #444; }
  .grab { width: 15px; display: flex; flex-direction: column; align-items: center; justify-content: center; gap: 1px; border: 1px solid #979797; border-radius: 2px; background: linear-gradient(90deg, #f6f6f6, #e2e2e2 50%, #c8c8cc 60%, #dcdcdf); }
  .grab i { width: 7px; height: 1px; background: #555; }
  .space { flex: 1; }
  .left .grab { height: 216px; }
  .right .grab { height: 126px; margin-top: 139px; }
  .files { flex: 1; display: grid; grid-template-columns: repeat(4, 105px); grid-auto-rows: 132px; column-gap: 3px; margin-top: -80px; padding-left: 15px; margin-left: 1px; border-left: 1px solid #d5e3f3; }
  .file { flex-direction: column; justify-content: flex-start; height: 116px; border: 1px solid transparent; border-radius: 2px; }
  .thumb { width: 96px; height: 96px; margin-bottom: 1px; }
  .file span { text-align: center; white-space: pre; line-height: 15px; }
  .selected { border-color: #7da2ce; background: linear-gradient(#dcebfc, #c1dcfc); }
  .bottom { position: relative; display: grid; grid-template-columns: 184px 218px 188px; column-gap: 5px; row-gap: 6px; align-items: center; padding: 8px 16px 14px 0; height: 76px; }
  .bottom label { text-align: right; }
  .combo { display: flex; align-items: center; height: 24px; padding: 0 4px; }
  .combo.name { background: #fff; border: 1px solid #e6e8ec; padding-left: 3px; }
  .name input { flex: 1; }
  .combo.type { margin-left: 7px; width: 188px; border: 1px solid #707070; border-radius: 2px; background: linear-gradient(#f2f2f2, #ebebeb 48%, #dddddd 50%, #cfcfcf); padding-left: 3px; gap: 9px; }
  .type select { flex: 1; appearance: none; overflow: hidden; }
  .actions { grid-column: 3; display: flex; gap: 14px; margin-left: 8px; width: 186px; }
  .actions button { width: 86px; height: 24px; border: 1px solid #707070; border-radius: 3px; background: linear-gradient(#f2f2f2, #ebebeb 48%, #dddddd 50%, #cfcfcf); box-shadow: inset 0 0 0 1px #fbfbfb; }
  .actions .open { border-color: #2d77a8; box-shadow: inset 0 0 0 1px #3ec9f0; background: linear-gradient(#edf6fb, #dceef8 48%, #c5e2f2 50%, #b4d6e9); }
  .open > span { flex: 1; }
  .open > i { display: flex; align-items: center; height: 18px; padding: 0 2px 0 1px; border-left: 1px solid #333; }
  .open .tri { border-width: 5px 5px 0; }
  .grip { position: absolute; right: 2px; bottom: 2px; width: 8px; height: 8px; }
</style>
